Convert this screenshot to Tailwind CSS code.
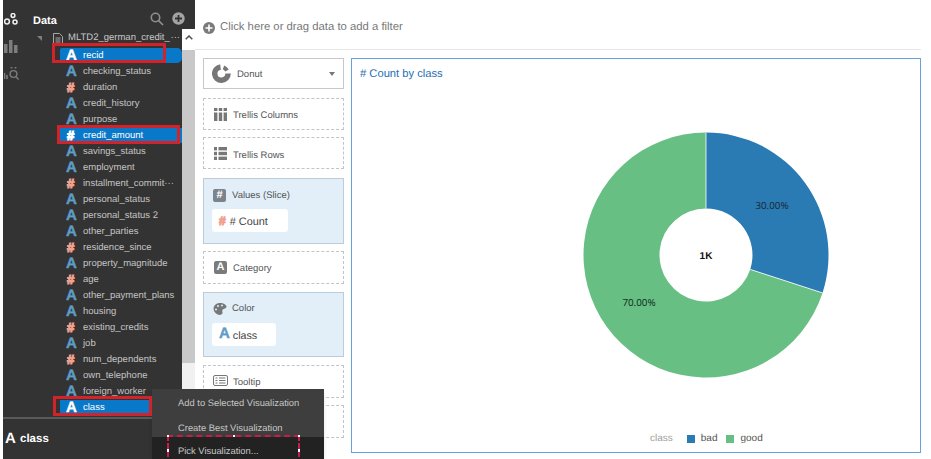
<!DOCTYPE html>
<html lang="en">
<head>
  <meta charset="UTF-8">
  <title>Data visualization</title>
  <script src="https://cdn.jsdelivr.net/npm/@tailwindcss/browser@4"></script>
</head>
<body class="bg-white font-['Liberation_Sans',sans-serif] [text-rendering:geometricPrecision]">
  <div class="relative flex h-[459px] w-[931px] overflow-hidden">

    <!-- data panel -->
    <aside class="flex h-full w-[195px] shrink-0 flex-col pl-[3px]">
      <div class="flex min-h-0 flex-1 bg-[#333333]">
        <nav class="flex w-[27px] shrink-0 flex-col pl-px pt-[13px]">
          <svg class="h-[12px] w-[14px]" viewBox="0 0 14 12" fill="none" stroke="#f2f2f2" stroke-width="1.500">
            <circle cx="9" cy="2.500" r="1.900"/><circle cx="3" cy="8.500" r="2.400"/><circle cx="11" cy="9" r="2"/>
          </svg>
          <svg class="mt-[15px] h-[13px] w-[14px]" viewBox="0 0 14 13" fill="#7d7d7d">
            <rect x="0" y="4" width="3.500" height="9"/><rect x="5" y="0" width="3.500" height="13"/><rect x="10" y="5" width="3.500" height="8"/>
          </svg>
          <svg class="mt-[13px] h-[14px] w-[17px]" viewBox="0 0 17 14" fill="none" stroke="#7d7d7d" stroke-width="1.400">
            <path d="M.5 7v6M3 9v4" stroke-width="1.600"/><circle cx="9.500" cy="8" r="3.400"/><path d="M12.200 11l2.400 2.400"/><path d="M7.500 1v1.600M11.500 1v1.600" stroke-width="1.800"/>
          </svg>
        </nav>
        <div class="flex min-w-0 flex-1 flex-col">
          <header class="relative flex h-[29px] shrink-0 items-center pl-[3px] pt-[14px]">
            <h2 class="text-[11px] font-bold leading-none text-white">Data</h2>
            <svg class="absolute left-[120px] top-[12px] h-[14px] w-[14px]" viewBox="0 0 14 14" fill="none" stroke="#8f8f8f" stroke-width="1.600">
              <circle cx="5.500" cy="5.500" r="4.200"/><path d="M8.600 8.600l4.400 4.400"/>
            </svg>
            <svg class="absolute left-[142px] top-[12px] h-[13px] w-[13px]" viewBox="0 0 13 13">
              <circle cx="6.500" cy="6.500" r="6.200" fill="#a3a3a3"/><path d="M6.500 3v7M3 6.500h7" stroke="#333333" stroke-width="1.800"/>
            </svg>
          </header>
          <div class="flex min-h-0 flex-1">
            <div class="min-w-0 flex-1">
              <div class="flex h-[19px] items-center pl-[7px]">
                <span class="h-0 w-0 border-l-[5px] border-t-[5px] border-l-transparent border-t-[#7d7d7d]"></span>
                <svg class="ml-[11px] h-[12px] w-[10px] shrink-0" viewBox="0 0 10 12" fill="none" stroke="#a8a8a8">
                  <path d="M.5.500h6l3 3v8h-9zM2.500 5h5M2.500 7h5M2.500 9h5"/>
                </svg>
                <span class="ml-[5px] flex w-[112px] items-center justify-between whitespace-nowrap text-[9.500px] text-[#c8c8c8]"><span>MLTD2_german_credit_</span><span>···</span></span>
              </div>
              <ul class="text-[9.500px] leading-[15px] text-[#c4c4c4]">
                <li class="mb-px ml-[30px] flex h-[15px] items-center rounded-l-[2px] rounded-r-[5px] bg-[#0a78c8] pl-[6px] text-white"><b class="w-[17px] shrink-0 text-[15px] font-black [-webkit-text-stroke:0.4px_currentColor]">A</b>recid</li>
                <li class="mb-px ml-[30px] flex h-[15px] items-center pl-[6px]"><b class="w-[17px] shrink-0 text-[15px] font-black text-[#5f9cc8] [-webkit-text-stroke:0.4px_currentColor]">A</b>checking_status</li>
                <li class="mb-px ml-[30px] flex h-[15px] items-center pl-[6px]"><b class="w-[17px] shrink-0 pl-px text-[13px] font-black text-[#f0a08c] [-webkit-text-stroke:1.100px_currentColor]">#</b>duration</li>
                <li class="mb-px ml-[30px] flex h-[15px] items-center pl-[6px]"><b class="w-[17px] shrink-0 text-[15px] font-black text-[#5f9cc8] [-webkit-text-stroke:0.4px_currentColor]">A</b>credit_history</li>
                <li class="mb-px ml-[30px] flex h-[15px] items-center pl-[6px]"><b class="w-[17px] shrink-0 text-[15px] font-black text-[#5f9cc8] [-webkit-text-stroke:0.4px_currentColor]">A</b>purpose</li>
                <li class="mb-px ml-[30px] flex h-[15px] items-center bg-[#0a78c8] pl-[6px] text-white"><b class="w-[17px] shrink-0 pl-px text-[13px] font-black [-webkit-text-stroke:1.100px_currentColor]">#</b>credit_amount</li>
                <li class="mb-px ml-[30px] flex h-[15px] items-center pl-[6px]"><b class="w-[17px] shrink-0 text-[15px] font-black text-[#5f9cc8] [-webkit-text-stroke:0.4px_currentColor]">A</b>savings_status</li>
                <li class="mb-px ml-[30px] flex h-[15px] items-center pl-[6px]"><b class="w-[17px] shrink-0 text-[15px] font-black text-[#5f9cc8] [-webkit-text-stroke:0.4px_currentColor]">A</b>employment</li>
                <li class="mb-px ml-[30px] flex h-[15px] items-center whitespace-nowrap pl-[6px]"><b class="w-[17px] shrink-0 pl-px text-[13px] font-black text-[#f0a08c] [-webkit-text-stroke:1.100px_currentColor]">#</b>installment_commit···</li>
                <li class="mb-px ml-[30px] flex h-[15px] items-center pl-[6px]"><b class="w-[17px] shrink-0 text-[15px] font-black text-[#5f9cc8] [-webkit-text-stroke:0.4px_currentColor]">A</b>personal_status</li>
                <li class="mb-px ml-[30px] flex h-[15px] items-center pl-[6px]"><b class="w-[17px] shrink-0 text-[15px] font-black text-[#5f9cc8] [-webkit-text-stroke:0.4px_currentColor]">A</b>personal_status 2</li>
                <li class="mb-px ml-[30px] flex h-[15px] items-center pl-[6px]"><b class="w-[17px] shrink-0 text-[15px] font-black text-[#5f9cc8] [-webkit-text-stroke:0.4px_currentColor]">A</b>other_parties</li>
                <li class="mb-px ml-[30px] flex h-[15px] items-center pl-[6px]"><b class="w-[17px] shrink-0 pl-px text-[13px] font-black text-[#f0a08c] [-webkit-text-stroke:1.100px_currentColor]">#</b>residence_since</li>
                <li class="mb-px ml-[30px] flex h-[15px] items-center pl-[6px]"><b class="w-[17px] shrink-0 text-[15px] font-black text-[#5f9cc8] [-webkit-text-stroke:0.4px_currentColor]">A</b>property_magnitude</li>
                <li class="mb-px ml-[30px] flex h-[15px] items-center pl-[6px]"><b class="w-[17px] shrink-0 pl-px text-[13px] font-black text-[#f0a08c] [-webkit-text-stroke:1.100px_currentColor]">#</b>age</li>
                <li class="mb-px ml-[30px] flex h-[15px] items-center pl-[6px]"><b class="w-[17px] shrink-0 text-[15px] font-black text-[#5f9cc8] [-webkit-text-stroke:0.4px_currentColor]">A</b>other_payment_plans</li>
                <li class="mb-px ml-[30px] flex h-[15px] items-center pl-[6px]"><b class="w-[17px] shrink-0 text-[15px] font-black text-[#5f9cc8] [-webkit-text-stroke:0.4px_currentColor]">A</b>housing</li>
                <li class="mb-px ml-[30px] flex h-[15px] items-center pl-[6px]"><b class="w-[17px] shrink-0 pl-px text-[13px] font-black text-[#f0a08c] [-webkit-text-stroke:1.100px_currentColor]">#</b>existing_credits</li>
                <li class="mb-px ml-[30px] flex h-[15px] items-center pl-[6px]"><b class="w-[17px] shrink-0 text-[15px] font-black text-[#5f9cc8] [-webkit-text-stroke:0.4px_currentColor]">A</b>job</li>
                <li class="mb-px ml-[30px] flex h-[15px] items-center pl-[6px]"><b class="w-[17px] shrink-0 pl-px text-[13px] font-black text-[#f0a08c] [-webkit-text-stroke:1.100px_currentColor]">#</b>num_dependents</li>
                <li class="mb-px ml-[30px] flex h-[15px] items-center pl-[6px]"><b class="w-[17px] shrink-0 text-[15px] font-black text-[#5f9cc8] [-webkit-text-stroke:0.4px_currentColor]">A</b>own_telephone</li>
                <li class="mb-px ml-[30px] flex h-[15px] items-center pl-[6px]"><b class="w-[17px] shrink-0 text-[15px] font-black text-[#5f9cc8] [-webkit-text-stroke:0.4px_currentColor]">A</b>foreign_worker</li>
                <li class="mb-px ml-[30px] flex h-[15px] items-center bg-[#0a78c8] pl-[6px] text-white"><b class="w-[17px] shrink-0 text-[15px] font-black [-webkit-text-stroke:0.4px_currentColor]">A</b>class</li>
              </ul>
            </div>
            <!-- scrollbar -->
            <div class="flex w-[13px] shrink-0 flex-col bg-[#f1f1f1]">
              <div class="flex h-[21px] items-start justify-center bg-white pt-[6px]">
                <svg class="h-[5px] w-[8px]" viewBox="0 0 8 5" fill="none" stroke="#505050" stroke-width="1.500"><path d="M.7 4.300L4 1l3.300 3.300"/></svg>
              </div>
              <div class="h-[313px] bg-[#c8c8c8]"></div>
            </div>
          </div>
        </div>
      </div>
      <div class="h-[42px] shrink-0 border-t-2 border-[#5a5a5a] bg-[#333333] pl-[2px] pt-[9px]">
        <div class="flex items-center text-[11.500px] font-bold text-white"><b class="w-[15px] text-[15px] font-black">A</b>class</div>
        <div class="mt-[8px] h-[4px] w-[19px] bg-[#0a78c8]"></div>
      </div>
    </aside>

    <!-- workspace -->
    <main class="flex min-w-0 flex-1 flex-col pr-[10px]">
      <div class="flex h-[50px] shrink-0 items-center border-b border-[#e6e6e6] pl-[8px] pt-[4px] text-[11.300px] text-[#777777]">
        <svg class="mr-[5px] mt-[2px] h-[12px] w-[12px]" viewBox="0 0 12 12">
          <circle cx="6" cy="6" r="6" fill="#7a7a7a"/><path d="M6 2.500v7M2.500 6h7" stroke="#ffffff" stroke-width="1.600"/>
        </svg>
        <span class="pt-px">Click here or drag data to add a filter</span>
      </div>
      <div class="flex min-h-0 flex-1 pl-[8px] pt-[8px]">

        <!-- grammar shelves -->
        <div class="flex w-[141px] shrink-0 flex-col text-[9.500px] text-[#555555]">
          <div class="flex h-[31px] items-center border border-[#c8c8c8] pl-[8px] pr-[8px]">
            <svg class="h-[19px] w-[19px]" viewBox="0 0 19 19" fill="none" stroke="#777777" stroke-width="5.500">
              <path d="M8.500 2.900a6.700 6.700 0 1 0 7.600 6.600"/><path d="M11.500 3.300a6.700 6.700 0 0 1 3.500 3.200" stroke-width="4"/>
            </svg>
            <span class="ml-[6px] flex-1 pt-[4px]">Donut</span>
            <span class="h-0 w-0 border-x-[3.500px] border-t-[4px] border-x-transparent border-t-[#777777]"></span>
          </div>
          <div class="mt-[9px] flex h-[32px] items-center border border-dashed border-[#c4c4c4] pl-[10px]">
            <svg class="mr-[6px] h-[13px] w-[13px]" viewBox="0 0 13 13" fill="#777777">
              <rect width="3.400" height="3"/><rect x="4.800" width="3.400" height="3"/><rect x="9.600" width="3.400" height="3"/>
              <rect y="4.500" width="3.400" height="8.500"/><rect x="4.800" y="4.500" width="3.400" height="8.500"/><rect x="9.600" y="4.500" width="3.400" height="8.500"/>
            </svg>
            <span class="pt-[4px]">Trellis Columns</span>
          </div>
          <div class="mt-[7px] flex h-[32px] items-center border border-dashed border-[#c4c4c4] pl-[10px]">
            <svg class="mr-[6px] h-[13px] w-[13px]" viewBox="0 0 13 13" fill="#777777">
              <rect width="3" height="3.400"/><rect x="4.500" width="8.500" height="3.400"/><rect y="4.800" width="3" height="3.400"/>
              <rect x="4.500" y="4.800" width="8.500" height="3.400"/><rect y="9.600" width="3" height="3.400"/><rect x="4.500" y="9.600" width="8.500" height="3.400"/>
            </svg>
            <span class="pt-[6px]">Trellis Rows</span>
          </div>
          <div class="mt-[9px] h-[66px] border border-[#bcccd9] bg-[#e2eef8] pl-[9px] pt-[8px]">
            <div class="flex h-[16px] items-center">
              <span class="mr-[6px] flex h-[13px] w-[13px] items-center justify-center rounded-[2px] bg-[#7b848c] text-[11px] font-bold leading-none text-white">#</span>
              <span class="pt-[2px]">Values (Slice)</span>
            </div>
            <div class="-ml-px mt-[6px] flex h-[23px] w-[76px] items-center rounded-[3px] bg-white pl-[7px] text-[10.900px] text-[#444444]"><b class="mr-[4px] text-[12px] font-black text-[#f0a08c] [-webkit-text-stroke:1px_currentColor]">#</b><span class="pt-[3px]"># Count</span></div>
          </div>
          <div class="mt-[7px] flex h-[33px] items-center border border-dashed border-[#c4c4c4] pl-[10px]">
            <span class="mr-[6px] flex h-[13px] w-[13px] items-center justify-center rounded-[2px] bg-[#7b7b7b] text-[11px] font-bold leading-none text-white">A</span>
            <span class="pt-[4px]">Category</span>
          </div>
          <div class="mt-[8px] h-[65px] border border-[#bcccd9] bg-[#e2eef8] pl-[9px] pt-[8px]">
            <div class="flex h-[16px] items-center">
              <svg class="mr-[5px] h-[14px] w-[14px]" viewBox="0 0 14 14">
                <path d="M7 1c3.800 0 6.500 2 6.500 3.800S10.500 6.500 9.500 8s1 2.500-.5 4c-1.400 1.200-4 1.200-5.600-.2C1.300 10 .5 8.500.6 6.500.8 3.200 3.600 1 7 1z" fill="#777777"/>
                <circle cx="5" cy="4" r="1" fill="#e2eef8"/><circle cx="3" cy="7.500" r="1" fill="#e2eef8"/><circle cx="9" cy="3.500" r="1" fill="#e2eef8"/>
              </svg>
              Color
            </div>
            <div class="-ml-px mt-[6px] flex h-[23px] w-[64px] items-center rounded-[3px] bg-white pl-[7px] text-[10.700px] text-[#444444]"><b class="mr-[3px] text-[15px] font-black text-[#5f9cc8] [-webkit-text-stroke:0.4px_currentColor]">A</b><span class="pt-[3px]">class</span></div>
          </div>
          <div class="mt-[8px] flex h-[33px] items-start border border-dashed border-[#c4c4c4] pl-[9px] pt-[9px]">
            <svg class="mr-[5px] h-[11px] w-[15px]" viewBox="0 0 15 11" fill="none" stroke="#777777">
              <rect x=".5" y=".5" width="14" height="10" rx="1.500"/><path d="M2.500 3h2M2.500 5.500h2M2.500 8h2M6 3h6.500M6 5.500h6.500M6 8h6.500"/>
            </svg>
            <span class="pt-px">Tooltip</span>
          </div>
          <div class="mt-[7px] h-[33px] border border-dashed border-[#c4c4c4]"></div>
        </div>

        <!-- chart -->
        <section class="ml-[7px] flex h-[395px] w-[570px] flex-col border border-[#6aa2d8] pl-[8px] pt-[8px]">
          <h3 class="text-[11.200px] leading-[14px] text-[#1f6fb5]"># Count by class</h3>
          <svg class="ml-[223px] mt-[51px] h-[246px] w-[246px] shrink-0" viewBox="-123 -123 246 246">
            <path d="M0-122.500A122.500 122.500 0 0 1 116.500 37.900L44.200 14.400A46.500 46.500 0 0 0 0-46.500Z" fill="#2a7ab3"/>
            <path d="M116.500 37.900A122.500 122.500 0 1 1 0-122.500V-46.500A46.500 46.500 0 1 0 44.200 14.400Z" fill="#68bf83"/>
            <path d="M0-122.500V-46.500M116.500 37.900L44.200 14.400" stroke="#ffffff" stroke-width=".8"/>
            <text x="66" y="-46" text-anchor="middle" font-size="9.800" fill="#1c2c3a" font-family="Noto Sans">30.00%</text>
            <text x="-67" y="51" text-anchor="middle" font-size="9.800" fill="#12331f" font-family="Noto Sans">70.00%</text>
            <text x="0" y="3.500" text-anchor="middle" font-size="10" font-weight="700" fill="#111111" font-family="Liberation Sans">1K</text>
          </svg>
          <div class="ml-[290px] mt-[53px] flex items-center text-[10px] text-[#555555]">
            <span class="mr-[14px] text-[#a0a0a0]">class</span>
            <span class="mr-[6px] h-[8px] w-[8px] bg-[#2a7ab3]"></span><span class="mr-[9px]">bad</span>
            <span class="mr-[6px] h-[8px] w-[8px] bg-[#68bf83]"></span><span>good</span>
          </div>
        </section>
      </div>
    </main>

    <!-- context menu, over the panel and the shelves -->
    <div class="absolute left-[152px] top-[389px] h-[70px] w-[172px] bg-[#3e3e3e] text-[9.400px] text-[#c6c6c6] shadow-md">
      <div class="flex h-[24px] items-center pl-[26px] pt-[5px]">Add to Selected Visualization</div>
      <div class="flex h-[24px] items-center pl-[26px] pt-[7px]">Create Best Visualization</div>
      <div class="flex h-[22px] items-center bg-[#222222] pl-[26px] pt-[7px]">Pick Visualization...</div>
    </div>

    <!-- annotation boxes drawn on the screenshot -->
    <div class="absolute left-[52px] top-[43px] h-[20px] w-[114px] border-[3px] border-[#d2232a]"></div>
    <div class="absolute left-[57px] top-[125px] h-[19px] w-[123px] border-[3px] border-[#d2232a]"></div>
    <div class="absolute left-[53px] top-[396px] h-[20px] w-[99px] border-[3px] border-[#d2232a]"></div>
    <div class="absolute left-[167px] top-[435px] h-[30px] w-[133px] border-2 border-dashed border-[#c41e4a]"></div>
    <span class="absolute left-[167px] top-[435px] h-[2px] w-[2px] bg-white"></span>
    <span class="absolute left-[233px] top-[435px] h-[2px] w-[2px] bg-white"></span>
    <span class="absolute left-[298px] top-[435px] h-[2px] w-[2px] bg-white"></span>
    <span class="absolute left-[167px] top-[449px] h-[3px] w-[2px] bg-white"></span>
    <span class="absolute left-[298px] top-[449px] h-[3px] w-[2px] bg-white"></span>
  </div>
</body>
</html>
